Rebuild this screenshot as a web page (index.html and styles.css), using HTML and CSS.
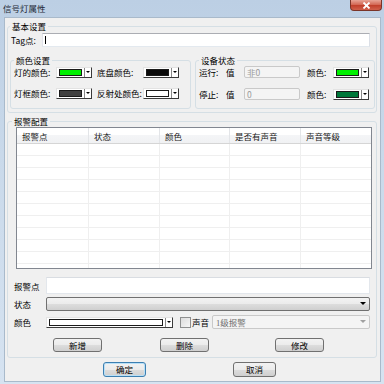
FILE: index.html
```html
<!DOCTYPE html>
<html lang="zh-CN">
<head>
    <meta charset="UTF-8">
    <title>信号灯属性</title>
    <link rel="stylesheet" href="styles.css">
</head>
<body>
    <div class="window">
        <div class="titlebar">
            <span class="title">信号灯属性</span>
            <span class="close">
                <svg width="9" height="7" viewBox="0 0 9 7"><path d="M1.5 0.5 L7.5 6.5 M7.5 0.5 L1.5 6.5" stroke="#fff" stroke-width="1.8"/></svg>
            </span>
        </div>
        <div class="client">
            <fieldset class="group basic">
                <legend>基本设置</legend>
                <div class="tag-row">
                    <label class="tag-label">Tag点:</label>
                    <div class="text-box tag-box"></div>
                </div>
                <div class="sub-groups">
                    <fieldset class="group colors">
                        <legend>颜色设置</legend>
                        <div class="color-grid">
                            <span>灯的颜色:</span>
                            <span class="color-btn"><i class="swatch" style="background:#00f000"></i><i class="drop"></i></span>
                            <span>底盘颜色:</span>
                            <span class="color-btn"><i class="swatch" style="background:#0a0a0a"></i><i class="drop"></i></span>
                            <span>灯框颜色:</span>
                            <span class="color-btn"><i class="swatch" style="background:#404040"></i><i class="drop"></i></span>
                            <span>反射处颜色:</span>
                            <span class="color-btn"><i class="swatch" style="background:#ffffff"></i><i class="drop"></i></span>
                        </div>
                    </fieldset>
                    <fieldset class="group status">
                        <legend>设备状态</legend>
                        <div class="status-grid">
                            <span>运行:</span>
                            <span>值</span>
                            <span class="text-box disabled">非0</span>
                            <span></span>
                            <span>颜色:</span>
                            <span class="color-btn"><i class="swatch" style="background:#00f000"></i><i class="drop"></i></span>
                            <span>停止:</span>
                            <span>值</span>
                            <span class="text-box disabled">0</span>
                            <span></span>
                            <span>颜色:</span>
                            <span class="color-btn"><i class="swatch" style="background:#00783a"></i><i class="drop"></i></span>
                        </div>
                    </fieldset>
                </div>
            </fieldset>

            <fieldset class="group alarm">
                <legend>报警配置</legend>
                <div class="list">
                    <div class="list-head">
                        <span>报警点</span>
                        <span>状态</span>
                        <span>颜色</span>
                        <span>是否有声音</span>
                        <span>声音等级</span>
                    </div>
                    <div class="list-row"><span></span><span></span><span></span><span></span><span></span></div>
                    <div class="list-row"><span></span><span></span><span></span><span></span><span></span></div>
                    <div class="list-row"><span></span><span></span><span></span><span></span><span></span></div>
                    <div class="list-row"><span></span><span></span><span></span><span></span><span></span></div>
                    <div class="list-row"><span></span><span></span><span></span><span></span><span></span></div>
                    <div class="list-row"><span></span><span></span><span></span><span></span><span></span></div>
                    <div class="list-row"><span></span><span></span><span></span><span></span><span></span></div>
                    <div class="list-row"><span></span><span></span><span></span><span></span><span></span></div>
                    <div class="list-row"><span></span><span></span><span></span><span></span><span></span></div>
                    <div class="list-row"><span></span><span></span><span></span><span></span><span></span></div>
                    <div class="list-row"><span></span><span></span><span></span><span></span><span></span></div>
                </div>

                <div class="form-row point-row">
                    <label class="form-label">报警点</label>
                    <div class="text-box point-box"></div>
                </div>
                <div class="form-row state-row">
                    <label class="form-label">状态</label>
                    <div class="combo"><i class="arrow"></i></div>
                </div>
                <div class="form-row color-row">
                    <label class="form-label">颜色</label>
                    <span class="color-btn wide"><i class="swatch" style="background:#ffffff"></i><i class="drop"></i></span>
                    <span class="checkbox"></span>
                    <span class="sound-label">声音</span>
                    <div class="combo off"><span class="combo-text">1级报警</span><i class="arrow"></i></div>
                </div>
                <div class="action-row">
                    <button class="btn add">新增</button>
                    <button class="btn del">删除</button>
                    <button class="btn edit">修改</button>
                </div>
            </fieldset>

            <div class="dialog-row">
                <button class="btn ok">确定</button>
                <button class="btn cancel">取消</button>
            </div>
        </div>
    </div>
</body>
</html>
```

FILE: styles.css
```css
body, html {
    margin: 0;
    padding: 0;
    font-family: "Noto Sans CJK SC", "Noto Sans", sans-serif;
    font-size: 8.5px;
    color: #000;
}
.window {
    width: 384px;
    height: 384px;
    overflow: hidden;
    background: linear-gradient(180deg, #bccfe4 0%, #c9d9ea 40%, #d6e3f1 100%);
}
.titlebar {
    height: 17px;
    box-sizing: border-box;
    padding: 0 2px 0 3px;
    display: flex;
    justify-content: space-between;
    align-items: flex-start;
}
.title {
    line-height: 16px;
    color: #1e2a38;
}
.close {
    width: 32px;
    height: 11px;
    box-sizing: border-box;
    border: 1px solid #7a3428;
    border-top: none;
    border-radius: 0 0 4px 4px;
    background: linear-gradient(180deg, #e8a496 0%, #d46a57 45%, #c1402c 55%, #d0604b 100%);
    display: flex;
    align-items: center;
    justify-content: center;
}
.close svg {
    display: block;
}
.client {
    margin-left: 4px;
    width: 377px;
    height: 365px;
    box-sizing: border-box;
    border: 1px solid #a9bacb;
    background: #f0f0f0;
}

/* group boxes */
.group {
    box-sizing: border-box;
    margin: 0;
    min-width: 0;
    border: 1px solid #d5dfe5;
    border-radius: 3px;
}
.group legend {
    padding: 0 2px;
    line-height: 11px;
}
.basic {
    width: 370px;
    margin: 3px 0 0 2px;
    padding: 1px 1px 3px 2px;
}
.tag-row {
    display: flex;
    height: 14px;
    margin-right: 5px;
    align-items: center;
}
.tag-label {
    width: 32px;
    padding-left: 1px;
    box-sizing: border-box;
}
.text-box {
    box-sizing: border-box;
    background: #fff;
    border: 1px solid;
    border-color: #abadb3 #dbdfe6 #e3e9ef #e2e3ea;
}
.tag-box {
    flex: 1;
    height: 14px;
    position: relative;
}
.tag-box::before {
    content: "";
    position: absolute;
    left: 2px;
    top: 2px;
    width: 1px;
    height: 8px;
    background: #000;
}
.sub-groups {
    display: flex;
    gap: 4px;
    margin-top: 8px;
    align-items: stretch;
}
.colors {
    width: 181px;
    padding: 1px 0 9px 3px;
}
.color-grid {
    display: grid;
    grid-template-columns: 42px 41px 46px 36px;
    grid-auto-rows: 11px;
    row-gap: 10px;
    align-items: center;
    line-height: 11px;
}
.status {
    width: 180px;
    padding: 0 5px 8px 3px;
}
.status-grid {
    display: grid;
    grid-template-columns: 27px 18px 56px 7px 26px 36px;
    grid-auto-rows: 12px;
    row-gap: 10px;
    align-items: center;
    line-height: 12px;
}
.text-box.disabled {
    height: 12px;
    background: #f4f4f4;
    border: 1px solid #c9c9c9;
    border-radius: 2px;
    color: #9a9a9a;
    padding-left: 2px;
    line-height: 10px;
}

/* colour picker button */
.color-btn {
    display: flex;
    width: 36px;
    height: 11px;
    box-sizing: border-box;
    background: #fff;
    border: 1px solid;
    border-color: #e3e3e3 #3a3a3a #3a3a3a #e3e3e3;
}
.color-btn .swatch {
    flex: 1;
    margin: 1px 2px;
    border: 1px solid #1a1a1a;
}
.color-btn .drop {
    width: 6px;
    border-left: 1px solid #8a8a8a;
    position: relative;
}
.color-btn .drop::after {
    content: "";
    position: absolute;
    left: 1px;
    top: 3px;
    border-left: 2px solid transparent;
    border-right: 2px solid transparent;
    border-top: 2px solid #000;
}
.color-btn.wide {
    width: 127px;
}

/* alarm config */
.alarm {
    width: 370px;
    margin: 3px 0 0 2px;
    padding: 0 4px 5px 4px;
}
.list {
    margin-left: 4px;
    width: 356px;
    height: 142px;
    box-sizing: border-box;
    border: 1px solid #828790;
    background: #fff;
    overflow: hidden;
}
.list-head, .list-row {
    display: grid;
    grid-template-columns: 72px 71px 70px 71px 1fr;
}
.list-head {
    height: 16px;
    box-sizing: border-box;
    border-bottom: 1px solid #d5d5d5;
    background: linear-gradient(180deg, #ffffff 0%, #ffffff 50%, #f4f5f7 50%, #f0f1f3 100%);
}
.list-head span {
    box-sizing: border-box;
    border-right: 1px solid #e3e5e8;
    padding: 1px 0 0 5px;
    line-height: 14px;
    color: #1a1a1a;
}
.list-row {
    height: 12px;
    box-sizing: border-box;
    border-bottom: 1px solid #efefef;
}
.list-row span {
    border-right: 1px solid #efefef;
}
.list-head span:last-child, .list-row span:last-child {
    border-right: none;
}
.form-row {
    display: flex;
    align-items: center;
    margin-right: 2px;
}
.form-label {
    width: 34px;
    padding-left: 2px;
    box-sizing: border-box;
}
.point-row {
    margin-top: 8px;
    height: 17px;
}
.point-box {
    flex: 1;
    height: 17px;
    border-color: #d9dde2 #e3e7ec #e3e7ec #e3e7ec;
}
.state-row {
    margin-top: 3px;
    height: 14px;
}
.combo {
    flex: 1;
    height: 14px;
    box-sizing: border-box;
    border: 1px solid #707070;
    border-radius: 2px;
    background: linear-gradient(180deg, #f2f2f2 0%, #ebebeb 50%, #dddddd 50%, #cfcfcf 100%);
    position: relative;
    display: flex;
    align-items: center;
}
.combo .arrow {
    position: absolute;
    right: 3px;
    top: 4px;
    border-left: 3px solid transparent;
    border-right: 3px solid transparent;
    border-top: 3px solid #000;
}
.color-row {
    margin-top: 4px;
    height: 14px;
}
.checkbox {
    width: 11px;
    height: 11px;
    box-sizing: border-box;
    margin-left: 7px;
    border: 1px solid #8e8f8f;
    background: linear-gradient(135deg, #dcdcdc 0%, #f6f6f6 100%);
}
.sound-label {
    width: 20px;
    margin-left: 1px;
}
.combo.off {
    border-color: #c9c9c9;
    background: #f4f4f4;
}
.combo.off .arrow {
    border-top-color: #a0a0a0;
}
.combo-text {
    padding-left: 3px;
    color: #707070;
    font-family: "Liberation Serif", "Noto Sans CJK SC", serif;
}

/* buttons */
.btn {
    box-sizing: border-box;
    width: 49px;
    height: 14px;
    padding: 0;
    font-family: inherit;
    font-size: 8.5px;
    line-height: 12px;
    color: #000;
    border: 1px solid #707070;
    border-radius: 3px;
    background: linear-gradient(180deg, #f2f2f2 0%, #ebebeb 50%, #dddddd 50%, #cfcfcf 100%);
}
.action-row {
    display: flex;
    margin-top: 9px;
    height: 14px;
}
.add {
    margin-left: 41px;
}
.del {
    margin-left: 58px;
}
.edit {
    margin-left: 66px;
}
.dialog-row {
    display: flex;
    margin-top: 4px;
    height: 15px;
}
.dialog-row .btn {
    width: 43px;
    height: 15px;
    line-height: 13px;
}
.ok {
    margin-left: 98px;
    border-color: #3c7fb1;
    box-shadow: inset 0 0 0 1px #b9e0f7;
}
.cancel {
    margin-left: 87px;
}
```
